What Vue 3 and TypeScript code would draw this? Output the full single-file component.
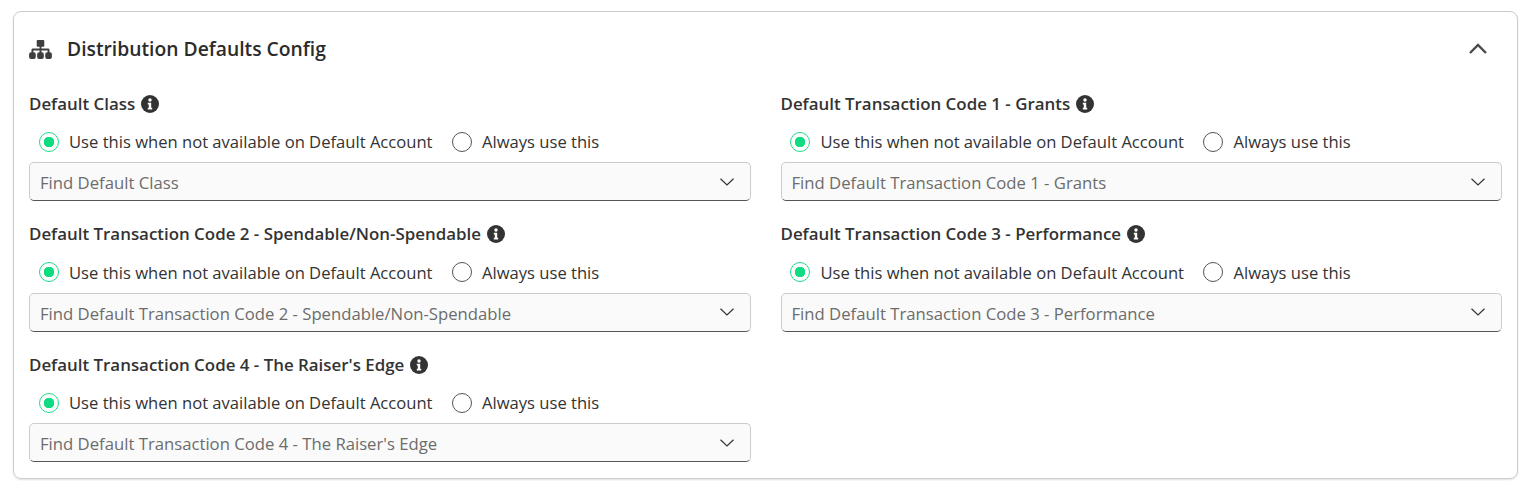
<template>
  <div class="page">
    <section class="card">
      <header class="card-head">
        <svg class="tree-icon" viewBox="0 0 24 20" width="23" height="19">
          <path d="M9 0h6a1 1 0 0 1 1 1v5a1 1 0 0 1-1 1h-2v2h7a1.5 1.5 0 0 1 1.500 1.500V13h.5a2 2 0 0 1 2 2v3a2 2 0 0 1-2 2h-3a2 2 0 0 1-2-2v-3a2 2 0 0 1 2-2h.5v-2H13v2h.5a2 2 0 0 1 2 2v3a2 2 0 0 1-2 2h-3a2 2 0 0 1-2-2v-3a2 2 0 0 1 2-2h.5v-2H4.500v2H5a2 2 0 0 1 2 2v3a2 2 0 0 1-2 2H2a2 2 0 0 1-2-2v-3a2 2 0 0 1 2-2h.5v-2.500A1.500 1.500 0 0 1 4 9h7V7H9a1 1 0 0 1-1-1V1a1 1 0 0 1 1-1z" fill="#3f3f3f" />
        </svg>
        <h2 class="title">Distribution Defaults Config</h2>
        <svg class="collapse" viewBox="0 0 18 11" width="18" height="11">
          <path d="M1 10 9 2l8 8" fill="none" stroke="#4a4a4a" stroke-width="2.400" />
        </svg>
      </header>
      <div class="fields">
        <div v-for="(field, i) in fields" :key="field" class="field">
          <div class="field-label">
            <span class="label-text">{{ field }}</span>
            <svg class="info" viewBox="0 0 18 18" width="18" height="18">
              <circle cx="9" cy="9" r="9" fill="#333" />
              <circle cx="9" cy="5" r="1.700" fill="#fff" />
              <path d="M6.800 7.800h3.400v5h1v1.600H6.800v-1.600h1v-3.400h-1z" fill="#fff" />
            </svg>
          </div>
          <div class="radios">
            <label class="radio">
              <input type="radio" :name="'mode' + i" checked />
              <span class="dot"></span>
              <span>Use this when not available on Default Account</span>
            </label>
            <label class="radio">
              <input type="radio" :name="'mode' + i" />
              <span class="dot"></span>
              <span>Always use this</span>
            </label>
          </div>
          <div class="select">
            <span class="placeholder">Find {{ field }}</span>
            <svg viewBox="0 0 14 8" width="14" height="8">
              <path d="M.5.7 7 7 13.500.7" fill="none" stroke="#333" stroke-width="1.200" />
            </svg>
          </div>
        </div>
      </div>
    </section>
  </div>
</template>

<script setup lang="ts">
const fields: string[] = [
  'Default Class',
  'Default Transaction Code 1 - Grants',
  'Default Transaction Code 2 - Spendable/Non-Spendable',
  'Default Transaction Code 3 - Performance',
  "Default Transaction Code 4 - The Raiser's Edge",
]
</script>

<style>
html,
body {
  margin: 0;
  background: #fff;
}
</style>

<style scoped>
.page {
  height: 481px;
  box-sizing: border-box;
  padding: 11px 16px 0 13px;
  overflow: hidden;
  font-family: 'Open Sans', 'Noto Sans', sans-serif;
  color: #333;
}

.card {
  box-sizing: border-box;
  height: 468px;
  padding: 0 15px;
  border: 1px solid #ccc;
  border-radius: 8px;
  box-shadow: 0 1px 2px rgba(0, 0, 0, 0.12);
}

.card-head {
  display: flex;
  align-items: center;
  height: 74px;
}

.tree-icon {
  margin-right: 15px;
}

.title {
  flex: 1;
  margin: 0 0 2px;
  font-size: 19.3px;
  font-weight: 600;
  color: #2b2b2b;
}

.collapse {
  margin-right: 15px;
  margin-top: -2px;
}

.fields {
  display: grid;
  grid-template-columns: 1fr 1fr;
  column-gap: 30px;
  row-gap: 15.5px;
}

.field-label {
  display: flex;
  align-items: center;
  gap: 6px;
  height: 20px;
  margin-top: 8px;
  font-size: 16.9px;
  font-weight: 600;
}

.label-text {
  margin-top: -2px;
}

.info {
  margin-top: -1px;
}

.radios {
  display: flex;
  gap: 19px;
  height: 24px;
  margin: 16px 0 8px 9.5px;
}

.radio {
  display: flex;
  align-items: center;
  gap: 10.5px;
  font-size: 16.6px;
}

.radio span:last-child {
  margin-top: -1px;
}

.radio input {
  display: none;
}

.dot {
  box-sizing: border-box;
  width: 20px;
  height: 20px;
  margin-top: -1px;
  border: 1px solid #555;
  border-radius: 50%;
  background: #fff;
}

.radio input:checked + .dot {
  border: 1.500px solid #1fdc88;
  background: radial-gradient(circle, #0fdb80 0 5px, #fff 5.500px);
}

.select {
  display: flex;
  align-items: center;
  justify-content: space-between;
  box-sizing: border-box;
  height: 39px;
  padding: 0 16px 0 10px;
  border: 1px solid #ccc;
  border-bottom: 1.500px solid #555;
  border-radius: 5px;
  background: #fafafa;
  font-size: 16.7px;
  color: #6c6c6c;
}

.placeholder {
  margin-top: 2px;
}
</style>
